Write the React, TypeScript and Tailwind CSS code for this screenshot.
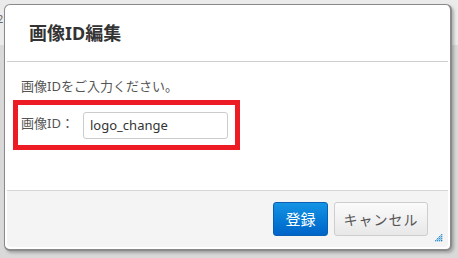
import React from "react";

const ResizeGrip = () => {
  const dots: Array<[number, number]> = [];
  for (let r = 0; r < 4; r++) {
    for (let c = 3 - r; c < 4; c++) {
      dots.push([c * 2, r * 2]);
    }
  }
  return (
    <svg width="9" height="9" viewBox="0 0 9 9" className="absolute right-[5px] bottom-[5px]">
      {dots.map(([x, y]) => (
        <rect key={`${x}-${y}`} x={x + 1} y={y + 1} width="1.3" height="1.3" fill="#1a7fc4" />
      ))}
      <path d="M8 1 L1 8 M8 3 L3 8 M8 5 L5 8" stroke="#4aa3dd" strokeWidth="0.6" />
    </svg>
  );
};

export default function App() {
  return (
    <div
      className="relative w-[458px] h-[258px] overflow-hidden bg-[#d9d9d9]"
      style={{ fontFamily: '"Noto Sans", "Noto Sans CJK JP", sans-serif' }}
    >
      <div className="h-[45px] bg-[#ebebeb] text-[11px] leading-none text-[#666] pt-[13px] -ml-[3px]">2</div>

      <div className="absolute left-[4px] top-[4px] w-[448px] h-[247px] flex flex-col bg-white rounded-[6px] border border-[#8a8a8a] border-r-2 border-b-2 shadow-[2px_2px_3px_rgba(0,0,0,0.25)] px-[2px] pb-[2px]">
        <div className="h-[57px] flex items-center pl-[22px] border-b border-[#cfcfcf]">
          <h1 className="text-[18px] font-bold text-[#333]">画像ID編集</h1>
        </div>

        <div className="flex-1 pt-[16px] pl-[6px]">
          <p className="pl-[8px] text-[13px] leading-[16px] text-[#555]">画像IDをご入力ください。</p>
          <div className="mt-[6px] w-[227px] h-[50px] border-[5px] border-[#ed1c24] flex items-start pt-[7px] pl-[3px]">
            <span className="text-[13px] leading-[16px] text-[#555] pt-[3px] w-[62px]">画像ID：</span>
            <div className="w-[145px] h-[27px] border border-[#ccc] rounded-[3px] flex items-center pl-[6px] text-[13px] text-[#333]">
              logo_change
            </div>
          </div>
        </div>

        <div className="relative h-[57px] bg-[#f4f4f4] border-t border-[#d6d6d6] rounded-b-[4px] flex items-start justify-end gap-[6px] pt-[11px] pr-[20px]">
          <button className="w-[55px] h-[34px] rounded-[3px] border border-[#0a5fb4] bg-gradient-to-b from-[#1594e4] to-[#0064c8] text-white text-[15px]">
            登録
          </button>
          <button className="w-[94px] h-[34px] rounded-[3px] border border-[#cdcdcd] bg-gradient-to-b from-[#fbfbfb] to-[#e8e8e8] text-[#555] text-[14px] tracking-[1px]">
            キャンセル
          </button>
          <ResizeGrip />
        </div>
      </div>
    </div>
  );
}
